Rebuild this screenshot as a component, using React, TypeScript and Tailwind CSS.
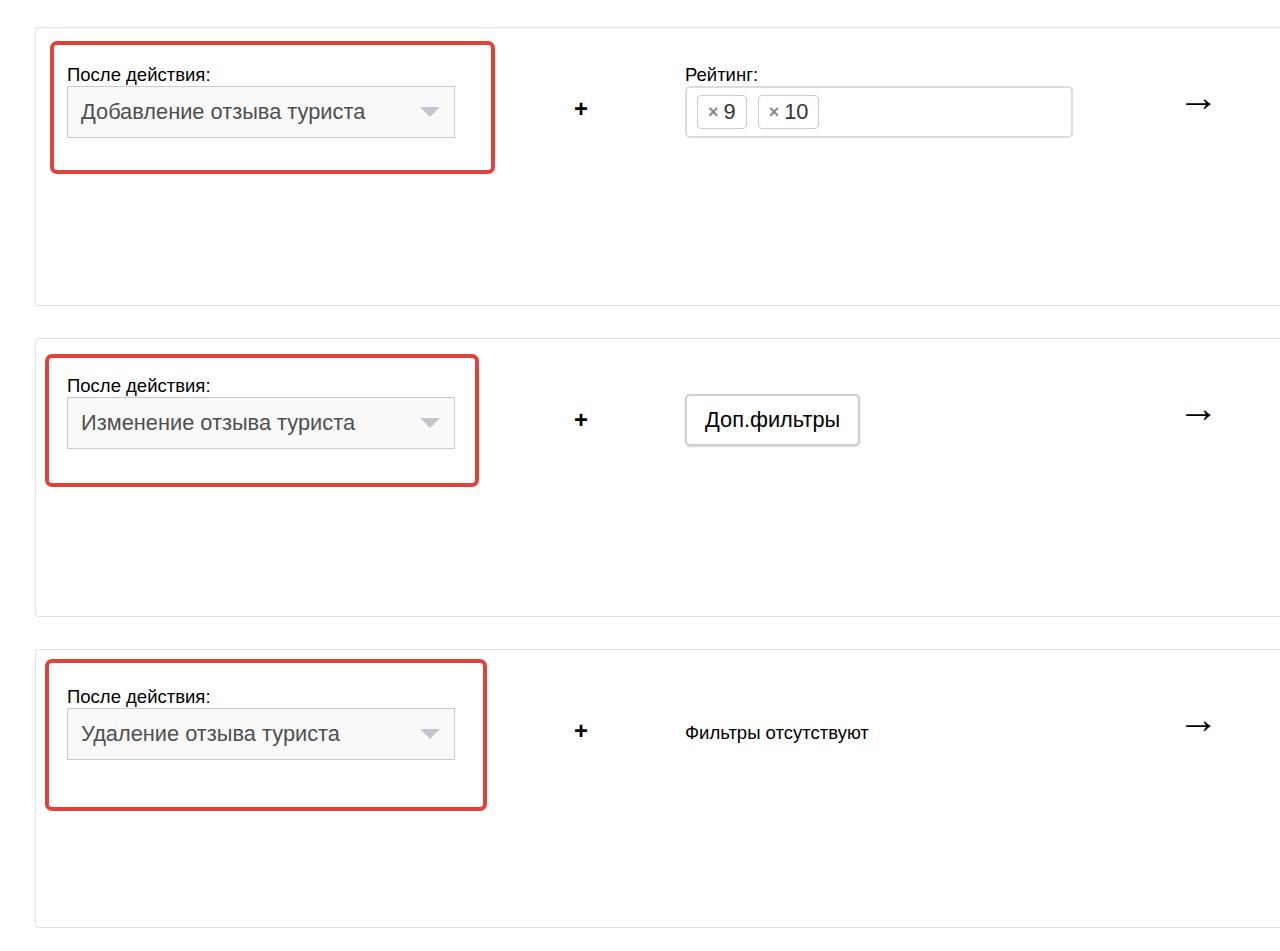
import type { ReactNode } from "react";

type Rule = {
  action: string;
  marker: string;
  filters: ReactNode;
};

function Select({ value }: { value: string }) {
  return (
    <div className="flex h-[52px] w-[388px] items-center justify-between border border-[#c9c9d3] bg-[#f9f9fa] pl-[13px] pr-[14px]">
      <span className="text-[21.8px] text-[#4f4f4f]">{value}</span>
      <span className="h-0 w-0 border-x-[10px] border-t-[10px] border-x-transparent border-t-[#c4c4ce]" />
    </div>
  );
}

function Tag({ label }: { label: string }) {
  return (
    <span className="flex h-[34px] items-center gap-[5px] rounded-[4px] border border-[#ccc] bg-white px-[10px] text-[21.8px] text-[#333]">
      <span className="text-[18px] font-bold leading-none text-[#8a8a8a]">×</span>
      {label}
    </span>
  );
}

const rules: Rule[] = [
  {
    action: "Добавление отзыва туриста",
    marker: "left-[14px] top-[13px] h-[133px] w-[445px]",
    filters: (
      <div className="flex flex-col">
        <span className="h-[22px] text-[18.5px] leading-[22px] text-black">Рейтинг:</span>
        <div className="flex h-[52px] w-[388px] items-center gap-[11px] rounded-[5px] border-2 border-[#dcdcdc] px-[10px]">
          <Tag label="9" />
          <Tag label="10" />
        </div>
      </div>
    ),
  },
  {
    action: "Изменение отзыва туриста",
    marker: "left-[9px] top-[15px] h-[133px] w-[434px]",
    filters: (
      <div className="pt-[19px]">
        <button
          type="button"
          className="flex h-[52px] items-center rounded-[5px] border-2 border-[#cfcfcf] bg-white px-[18px] text-[21.8px] text-black shadow-[0_1px_2px_rgba(0,0,0,0.15)]"
        >
          Доп.фильтры
        </button>
      </div>
    ),
  },
  {
    action: "Удаление отзыва туриста",
    marker: "left-[9px] top-[9px] h-[152px] w-[442px]",
    filters: (
      <div className="flex h-[76px] items-end pb-[15px]">
        <span className="text-[18.5px] text-black">Фильтры отсутствуют</span>
      </div>
    ),
  },
];

export default function App() {
  return (
    <div className="min-h-[951px] bg-white pt-[27px] font-['Liberation_Sans',Arial,sans-serif]">
      <div className="ml-[35px] flex flex-col gap-[32px]">
        {rules.map((rule) => (
          <div
            key={rule.action}
            className="relative h-[279px] w-[1300px] rounded-[3px] border border-[#e0e0e0] bg-white pl-[31px] pt-[36px]"
          >
            <div className="flex items-start">
              <div className="flex w-[388px] flex-col">
                <span className="h-[22px] text-[18.5px] leading-[22px] text-black">
                  После действия:
                </span>
                <Select value={rule.action} />
              </div>
              <div className="flex h-[74px] w-[230px] items-center justify-center pt-[16px]">
                <span className="pl-[22px] text-[24px] font-bold leading-none text-black">+</span>
              </div>
              <div className="w-[388px]">{rule.filters}</div>
              <div className="ml-[105px] flex h-[66px] items-center">
                <span className="text-[41px] leading-none text-black">→</span>
              </div>
            </div>
            <div
              className={`pointer-events-none absolute rounded-[7px] border-4 border-[#e0413a] ${rule.marker}`}
            />
          </div>
        ))}
      </div>
    </div>
  );
}
